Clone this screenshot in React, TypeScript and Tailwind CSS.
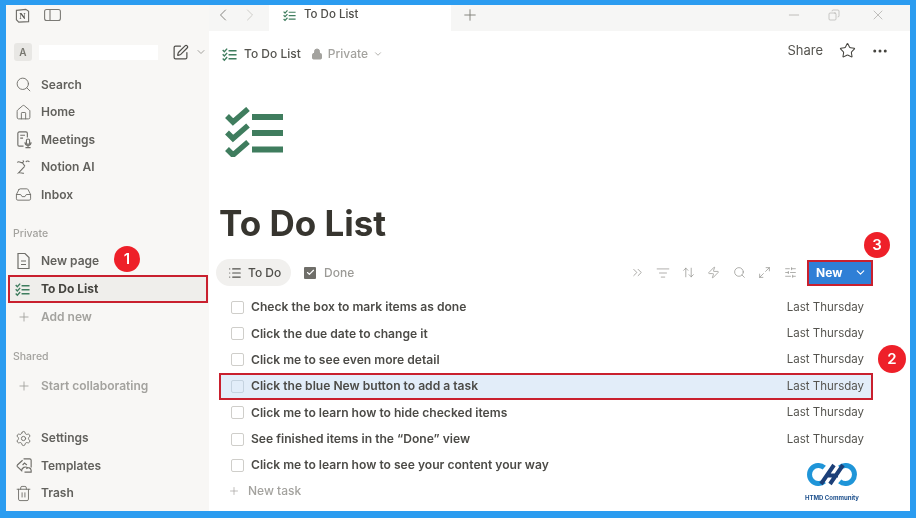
import { ArrowUpDown, Check, ChevronDown, ChevronLeft, ChevronRight, ChevronsRight, Copy, Ellipsis, Home, Inbox, List, ListFilter, Lock, Maximize2, Minus, Plus, Search, Settings, SlidersHorizontal, SquarePen, Star, Trash2, X, Zap } from "lucide-react";
import { ReactNode } from "react";

const font = "font-['Inter','Liberation_Sans',sans-serif]";

const ChecklistIcon = ({ size, width = 3 }: { size: number; width?: number }) => (
  <svg width={size} height={size} viewBox="0 0 32 28" fill="none" stroke="#3f7d5e" strokeWidth={width}>
    <path d="M1.5 4.5 5 8 11 1.5" />
    <path d="M1.5 13.5 5 17 11 10.5" />
    <path d="M1.5 22.5 5 26 11 19.5" />
    <path d="M14 6h17M14 14.5h17M14 23h17" />
  </svg>
);

const BigChecklistIcon = () => (
  <svg width="58" height="50" viewBox="0 0 58 50" fill="none" stroke="#3f7d5e">
    <g strokeWidth="5.5">
      <path d="M2 9 8 15 23 2" />
      <path d="M2 25.5 8 31.5 23 18.5" />
      <path d="M2 42 8 48 23 35" />
    </g>
    <path d="M27 10h31M27 26h31M27 42.5h31" strokeWidth="6" />
  </svg>
);

const MeetingsIcon = () => (
  <svg width="19" height="19" viewBox="0 0 20 20" fill="none" stroke="#6f6e69" strokeWidth="1.2">
    <path d="M9 17H4.5A1.5 1.5 0 0 1 3 15.5v-12A1.5 1.5 0 0 1 4.5 2h7A1.5 1.5 0 0 1 13 3.5V8" />
    <path d="M5.5 5.5h5M5.5 8.5h3" />
    <rect x="12" y="9.5" width="3.4" height="5.5" rx="1.7" />
    <path d="M10.5 13a3.2 3.2 0 0 0 6.4 0M13.7 16.2v2M11 18.6h5.4" />
  </svg>
);

const NotionAiIcon = () => (
  <svg width="18" height="18" viewBox="0 0 20 20" fill="none" stroke="#6f6e69" strokeWidth="1.2">
    <path d="M2.5 5c2-2.5 4 1 6 0s1-2 0-2M11 9 4 16.5c2.5-.8 4 .8 6 .5M12 4.5c1-1.5 3-1.5 4 0M8 5l3 4" />
  </svg>
);

const TemplatesIcon = () => (
  <svg width="19" height="19" viewBox="0 0 20 20" fill="none" stroke="#6f6e69" strokeWidth="1.2">
    <path d="M8 4.5 2.5 9.5a1.2 1.2 0 0 0 0 1.6L7 15.5a4 4 0 0 1 6.5-3" />
    <path d="M9 3h6.5A1.5 1.5 0 0 1 17 4.5V12M8 9.5l2-2 2.5 2" />
    <path d="M12 13.5a2.8 2.8 0 0 1 5 1.5v2h-7" />
  </svg>
);

const NavItem = ({ icon, label, muted }: { icon: ReactNode; label: string; muted?: boolean }) => (
  <div className={`flex h-[27.5px] items-center pl-[9px] text-[12px] font-semibold ${muted ? "text-[#a3a29e]" : "text-[#62615d]"}`}>
    <span className="flex w-[26px] items-center">{icon}</span>
    <span>{label}</span>
  </div>
);

const SectionLabel = ({ children, className }: { children: ReactNode; className: string }) => (
  <div className={`h-4 pl-[7px] text-[10.5px] leading-4 font-medium text-[#a3a29e] ${className}`}>{children}</div>
);

const tasks = [
  { label: "Check the box to mark items as done", date: "Last Thursday" },
  { label: "Click the due date to change it", date: "Last Thursday" },
  { label: "Click me to see even more detail", date: "Last Thursday" },
  { label: "Click the blue New button to add a task", date: "Last Thursday", active: true },
  { label: "Click me to learn how to hide checked items", date: "Last Thursday" },
  { label: "See finished items in the “Done” view", date: "Last Thursday" },
  { label: "Click me to learn how to see your content your way" },
];

const Badge = ({ n, className }: { n: number; className: string }) => (
  <div className={`absolute flex items-center justify-center rounded-full bg-[#ee2029] text-[15px] font-semibold text-white ${className}`}>{n}</div>
);

const Sidebar = () => (
  <aside className="flex h-full w-[203px] shrink-0 flex-col bg-[#f8f7f5] pb-[4px]">
    <div className="flex h-5 items-center gap-[14px] pl-[9px]">
      <svg width="15" height="15" viewBox="0 0 16 16" fill="none">
        <path d="M1.5 2.5 11.5 1.5 14.5 3.5V14.5L4 15 1.5 12.5Z" stroke="#6f6e69" strokeWidth="1.2" />
        <text x="4.6" y="12" fontSize="9.5" fontWeight="700" fill="#55544f" fontFamily="Liberation Serif, serif">N</text>
      </svg>
      <svg width="17" height="14" viewBox="0 0 17 14" fill="none" stroke="#7b7a75" strokeWidth="1.1">
        <rect x="0.6" y="1.5" width="15.8" height="11" rx="2" />
        <path d="M6 1.5v11" />
      </svg>
    </div>
    <div className="mt-[15px] flex h-6 items-center pl-2">
      <div className="flex h-[18px] w-[18px] items-center justify-center rounded-[3px] bg-[#e8e7e4] text-[10px] font-semibold text-[#77766f]">A</div>
      <div className="ml-[7px] h-[15px] w-[119px] bg-white" />
      <SquarePen size={17} strokeWidth={1.7} className="ml-[14px] text-[#4f4e4a]" />
      <ChevronDown size={12} className="ml-[6px] text-[#a3a29e]" />
    </div>
    <div className="mt-[7px]">
      <NavItem icon={<Search size={17} strokeWidth={1.3} className="text-[#6f6e69]" />} label="Search" />
      <NavItem icon={<Home size={17} strokeWidth={1.3} className="text-[#6f6e69]" />} label="Home" />
      <NavItem icon={<MeetingsIcon />} label="Meetings" />
      <NavItem icon={<NotionAiIcon />} label="Notion AI" />
      <NavItem icon={<Inbox size={17} strokeWidth={1.3} className="text-[#6f6e69]" />} label="Inbox" />
    </div>
    <SectionLabel className="mt-[17px]">Private</SectionLabel>
    <div className="mt-[6px]">
      <NavItem icon={<svg width="17" height="18" viewBox="0 0 17 18" fill="none" stroke="#6f6e69" strokeWidth="1.2"><path d="M3 1.5h7l4 4v11H3zM6 9h5M6 12.5h5" /></svg>} label="New page" />
    </div>
    <div className="ml-[2px] flex h-[28px] w-[200px] items-center border-2 border-[#c9202e] bg-[#efeeeb] pl-[5px] text-[12px] font-bold text-[#45443f]">
      <span className="flex w-[26px] items-center"><ChecklistIcon size={15} /></span>
      <span>To Do List</span>
    </div>
    <NavItem icon={<Plus size={14} strokeWidth={1.4} className="ml-[2px] text-[#9b9a96]" />} label="Add new" muted />
    <SectionLabel className="mt-[18px]">Shared</SectionLabel>
    <div className="mt-[8px]">
      <NavItem icon={<Plus size={14} strokeWidth={1.4} className="ml-[2px] text-[#9b9a96]" />} label="Start collaborating" muted />
    </div>
    <div className="mt-auto">
      <NavItem icon={<Settings size={17} strokeWidth={1.3} className="text-[#6f6e69]" />} label="Settings" />
      <NavItem icon={<TemplatesIcon />} label="Templates" />
      <NavItem icon={<Trash2 size={17} strokeWidth={1.3} className="text-[#6f6e69]" />} label="Trash" />
    </div>
  </aside>
);

const TabBar = () => (
  <div className="flex h-[26px] shrink-0 bg-[#f6f6f5]">
    <div className="flex w-[60px] items-center gap-[7px] pb-[6px] pl-1">
      <ChevronLeft size={20} strokeWidth={1.1} className="text-[#7b7a75]" />
      <ChevronRight size={20} strokeWidth={1.1} className="text-[#c9c8c4]" />
    </div>
    <div className="flex h-full w-[182px] items-center bg-white pb-[6px] pl-[14px] text-[11.5px] font-medium text-[#4f4e4a]">
      <ChecklistIcon size={13} />
      <span className="ml-[8px]">To Do List</span>
    </div>
    <div className="flex items-center pb-[6px]">
      <Plus size={18} strokeWidth={1.2} className="ml-[10px] text-[#7b7a75]" />
    </div>
    <div className="ml-auto flex items-center pr-[24px] pb-[6px]">
      <Minus size={16} strokeWidth={1} className="text-[#a3a29e]" />
      <Copy size={12} strokeWidth={1.1} className="ml-[26px] scale-x-[-1] text-[#a3a29e]" />
      <X size={16} strokeWidth={1} className="ml-[30px] text-[#a3a29e]" />
    </div>
  </div>
);

const Toolbar = () => (
  <div className="mt-[14px] ml-[7px] flex h-[27px] items-center">
    <div className="flex h-[27px] w-[75px] items-center rounded-full bg-[#f1f0ee] pl-[12px] text-[12px] font-medium text-[#4f4e4a]">
      <List size={14} strokeWidth={2} />
      <span className="ml-[6px]">To Do</span>
    </div>
    <div className="ml-[13px] flex h-3 w-3 items-center justify-center rounded-[1px] bg-[#6f6e69]">
      <Check size={9} strokeWidth={3} className="text-white" />
    </div>
    <span className="ml-2 text-[12px] font-medium text-[#9b9a96]">Done</span>
    <div className="ml-auto flex items-center gap-[12.5px] pr-[37px] text-[#8f8e8a]">
      <ChevronsRight size={15} strokeWidth={1.2} className="-mr-[1px]" />
      <ListFilter size={14} strokeWidth={1.2} className="-mr-[1px]" />
      <ArrowUpDown size={13} strokeWidth={1.3} />
      <Zap size={13} strokeWidth={1.3} />
      <Search size={13} strokeWidth={1.3} />
      <Maximize2 size={13} strokeWidth={1.3} />
      <SlidersHorizontal size={13} strokeWidth={1.3} />
      <div className="-ml-[2px] flex h-[26px] w-[66px] items-center border-2 border-[#c9202e] bg-[#2f7fd6] text-[12px] font-bold text-white">
        <span className="ml-[7px]">New</span>
        <ChevronDown size={13} strokeWidth={2} className="mr-[4px] ml-auto" />
      </div>
    </div>
  </div>
);

const TaskRow = ({ label, date, active }: { label: string; date?: string; active?: boolean }) => (
  <div className={`ml-[10px] flex h-[26.4px] w-[654px] items-center text-[12.1px] font-semibold text-[#4c4b47] ${active ? "border-2 border-[#c9202e] bg-[#e2edf9]" : ""}`}>
    <span className={`flex items-center ${active ? "pl-[10px]" : "pl-3"}`}>
      <span className={`h-[13px] w-[13px] rounded-[2px] border ${active ? "border-[#c5d3e0]" : "border-[#cfceca] bg-white"}`} />
    </span>
    <span className="ml-[7px]">{label}</span>
    {date && <span className={`ml-auto text-[11.5px] font-normal text-[#55544f] ${active ? "pr-[7px]" : "pr-[9px]"}`}>{date}</span>}
  </div>
);

const HtmdLogo = () => (
  <div className="absolute left-[804px] top-[463px] flex w-[56px] flex-col items-center">
    <svg width="50" height="23" viewBox="0 0 50 23" fill="none" strokeWidth="5">
      <path d="M17.3 4.6A9 9 0 1 0 17.3 18.4" stroke="#1f95d8" />
      <path d="M32.7 4.6A9 9 0 1 1 32.7 18.4" stroke="#1f95d8" />
      <path d="M27 2 14 21M36 2 23 21M19 12.5H31" stroke="#1c3f78" strokeWidth="4" />
    </svg>
    <span className="mt-[8px] text-[6px] leading-[8px] font-bold whitespace-nowrap text-[#1c4f8c]">HTMD Community</span>
  </div>
);

export default function App() {
  return (
    <div className={`relative h-[518px] w-[916px] overflow-hidden bg-[#2b9cf0] pt-[5px] pr-[6px] pb-[7px] pl-[6px] blur-[0.4px] ${font}`}>
      <div className="flex h-full bg-white">
        <Sidebar />
        <main className="flex min-w-0 flex-1 flex-col">
          <TabBar />
          <div className="flex h-[44px] items-center pt-[2px] pl-[13px] text-[12px]">
            <ChecklistIcon size={15} />
            <span className="ml-[7px] font-medium text-[#55544f]">To Do List</span>
            <Lock size={12} strokeWidth={2} fill="currentColor" className="ml-[10px] text-[#a3a29e]" />
            <span className="ml-[5px] font-medium text-[#a3a29e]">Private</span>
            <ChevronDown size={10} className="ml-[5px] text-[#a3a29e]" />
            <div className="ml-auto flex items-center pr-[21px]">
              <span className="-mt-[7px] text-[13px] text-[#55544f]">Share</span>
              <Star size={17} strokeWidth={1.5} className="-mt-[7px] ml-4 text-[#45443f]" />
              <Ellipsis size={18} strokeWidth={2} className="-mt-[7px] ml-[15px] text-[#45443f]" />
            </div>
          </div>
          <div className="mt-[32px] ml-[16px]">
            <BigChecklistIcon />
          </div>
          <h1 className="mt-[44px] ml-[10px] text-[35px] leading-[44px] font-bold text-[#37352f]">To Do List</h1>
          <Toolbar />
          <div className="mt-[8px]">
            {tasks.map((t) => (
              <TaskRow key={t.label} label={t.label} date={t.date} active={t.active} />
            ))}
          </div>
          <div className="ml-[19px] flex h-6 items-center text-[12px] font-medium text-[#a3a29e]">
            <Plus size={12} strokeWidth={1.4} />
            <span className="ml-[8px]">New task</span>
          </div>
        </main>
      </div>
      <Badge n={1} className="left-[114px] top-[246px] h-[26px] w-[26px]" />
      <Badge n={2} className="left-[878px] top-[345px] h-[28px] w-[28px]" />
      <Badge n={3} className="left-[864px] top-[232px] h-[26px] w-[26px]" />
      <HtmdLogo />
    </div>
  );
}
